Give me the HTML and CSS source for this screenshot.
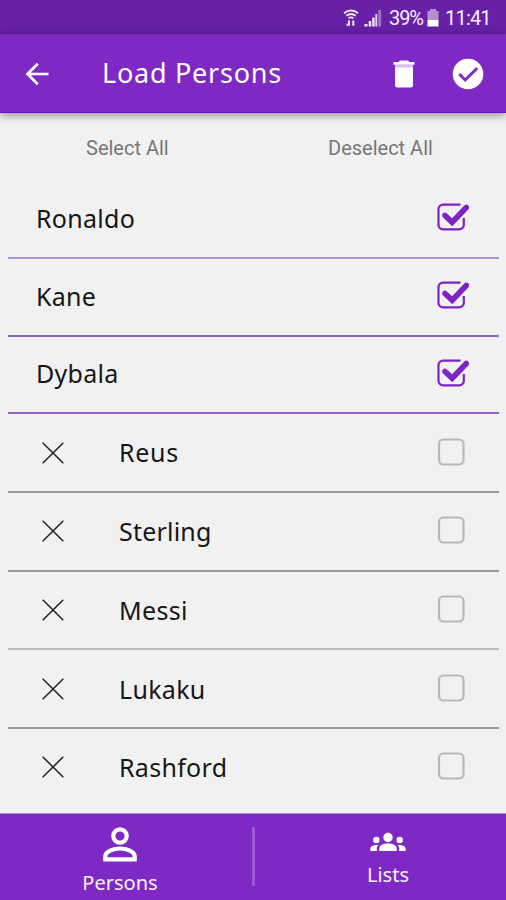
FILE: index.html
```html
<!DOCTYPE html>
<html lang="en">
<head>
<meta charset="utf-8">
<title>Load Persons</title>
<link rel="stylesheet" href="styles.css">
</head>
<body>
<svg width="0" height="0" class="defs">
  <symbol id="checked" viewBox="0 0 32 28">
    <path d="M23.500 1.600H6a4.500 4.500 0 0 0-4.500 4.500v15.800A4.500 4.500 0 0 0 6 26.400h16.300a4.500 4.500 0 0 0 4.500-4.500V15" fill="none" stroke="#7d22c6" stroke-width="2.200"/>
    <path d="M8 12.500l7.200 6.700L29.300 4.500" fill="none" stroke="#7d22c6" stroke-width="5.600" stroke-linecap="round"/>
  </symbol>
  <symbol id="unchecked" viewBox="0 0 32 28">
    <rect x="2" y="1.500" width="24.500" height="25" rx="4.500" fill="none" stroke="#b9b9b9" stroke-width="2.200"/>
  </symbol>
  <symbol id="cross" viewBox="0 0 22 22">
    <path d="M.7.700l20.600 20.600M21.300.700L.7 21.300" fill="none" stroke="#222" stroke-width="1.500"/>
  </symbol>
</svg>
<div class="app">
  <div class="status">
    <svg class="wifi" width="16" height="18" viewBox="0 0 16 18" fill="none" stroke="#f0e6fa" stroke-width="1.900">
      <path d="M1 4.200Q8-1.200 15 4.200M3.300 6.800q4.700-3.600 9.400 0M5.600 9.300q2.400-1.800 4.800 0"/>
      <path d="M6 16.800V11.500M3.600 15.800h3M10.300 11.500v5.300" stroke-width="2"/>
    </svg>
    <svg class="signal" width="18" height="18" viewBox="0 0 18 18" fill="#f3eafc">
      <path d="M.5 15h3v2.500h-3zM4.700 12h2.500v5.500H4.700zM8.200 8.500h2.400v9H8.200z"/><path d="M11.300 5h2v12.500h-2z" opacity=".85"/><path d="M14.300 1h2.900v16.500h-2.900z" opacity=".4"/>
    </svg>
    <span class="percent">39%</span>
    <svg class="battery" width="12" height="18" viewBox="0 0 12 18" fill="#fff">
      <path d="M3 0h6v2h2.500v9H.5V2H3z" opacity=".5"/><path d="M.5 11h11v6.500H.5z"/>
    </svg>
    <span class="time">11:41</span>
  </div>
  <header class="bar">
    <svg class="back" width="24" height="24" viewBox="0 0 24 24" fill="none" stroke="#fff" stroke-width="2.700"><path d="M23.500 12H2.500M12.800 1.700L2.500 12l10.300 10.300"/></svg>
    <h1 class="title">Load Persons</h1>
    <svg class="trash" width="22" height="28" viewBox="0 0 22 28" fill="#fff">
      <path d="M7 .5h8l1.400 1.500H21.500v2.800H.5V2h5.100z"/><path d="M2 4.800h18V8H2z" opacity=".7"/><path d="M2 7.500h18V25a2.500 2.500 0 0 1-2.500 2.500h-13A2.500 2.500 0 0 1 2 25z"/>
    </svg>
    <svg class="done" width="32" height="32" viewBox="0 0 32 32"><circle cx="16" cy="16" r="15.300" fill="#fff"/><path d="M7.200 16l6 6L25.300 10" fill="none" stroke="#7f29c5" stroke-width="3"/></svg>
  </header>
  <div class="actions"><span class="select">Select All</span><span class="deselect">Deselect All</span></div>
  <main class="list">
    <div class="row on first"><span class="name ronaldo">Ronaldo</span><svg class="box"><use href="#checked"/></svg></div>
    <div class="row on"><span class="name kane">Kane</span><svg class="box"><use href="#checked"/></svg></div>
    <div class="row on"><span class="name dybala">Dybala</span><svg class="box"><use href="#checked"/></svg></div>
    <div class="row"><svg class="cross"><use href="#cross"/></svg><span class="name reus">Reus</span><svg class="box"><use href="#unchecked"/></svg></div>
    <div class="row"><svg class="cross"><use href="#cross"/></svg><span class="name sterling">Sterling</span><svg class="box"><use href="#unchecked"/></svg></div>
    <div class="row soft"><svg class="cross"><use href="#cross"/></svg><span class="name messi">Messi</span><svg class="box"><use href="#unchecked"/></svg></div>
    <div class="row"><svg class="cross"><use href="#cross"/></svg><span class="name lukaku">Lukaku</span><svg class="box"><use href="#unchecked"/></svg></div>
    <div class="row last"><svg class="cross"><use href="#cross"/></svg><span class="name rashford">Rashford</span><svg class="box"><use href="#unchecked"/></svg></div>
  </main>
  <nav class="tabs">
    <div class="tab persons">
      <svg width="34" height="35" viewBox="0 0 34 35" fill="none" stroke="#fff" stroke-width="4.200"><circle cx="17" cy="9" r="6.700"/><path d="M2.300 32.300V29c0-4.500 8-7.500 14.700-7.500s14.700 3 14.700 7.500v3.300z"/></svg>
      <span class="label">Persons</span>
    </div>
    <div class="divider"></div>
    <div class="tab lists">
      <svg width="36" height="20" viewBox="0 0 36 20" fill="#fff"><circle cx="18" cy="5.500" r="4.700"/><circle cx="6.300" cy="8" r="3.200"/><circle cx="29.700" cy="8" r="3.200"/><path d="M9.300 19v-2.500c0-3.500 4-5 8.700-5s8.700 1.500 8.700 5V19zM.3 19v-2.200c0-2.600 3.500-4.300 8.200-3.800-1.300 1.200-1.700 2.300-1.700 3.800V19zM35.700 19v-2.200c0-2.600-3.500-4.300-8.200-3.800 1.300 1.200 1.700 2.300 1.700 3.800V19z"/></svg>
      <span class="label">Lists</span>
    </div>
  </nav>
</div>
</body>
</html>
```
FILE: styles.css
```css
* { box-sizing: border-box; }
body { margin: 0; background: #f1f1f1; font-family: "Noto Sans", sans-serif; }
.defs { position: absolute; }
svg { display: block; flex: none; }
.app { width: 506px; height: 900px; display: flex; flex-direction: column; overflow: hidden; }
.status { height: 34px; flex: none; background: #6820a7; display: flex; align-items: center; padding: 2px 0 0 343px; color: #f6effd; font: 20px/30px Roboto, sans-serif; white-space: nowrap; }
.signal { margin-left: 5px; }
.percent { width: 35px; margin-left: 7px; letter-spacing: -1.1px; }
.battery { margin-left: 3px; }
.time { margin-left: 6px; letter-spacing: -.8px; }
.bar { height: 79px; flex: none; background: #7f29c5; border-bottom: 1px solid #7210b5; box-shadow: 0 2px 9px rgba(0,0,0,.42); display: flex; align-items: center; padding-left: 25px; color: #fff; z-index: 1; }
.back { margin-top: 1px; }
.title { margin: 0 0 0 53px; width: 291px; font-size: 27px; font-weight: 400; line-height: 36px; letter-spacing: .75px; }
.trash { margin-top: 1px; }
.done { margin: 1px 0 0 37px; }
.actions { height: 67px; flex: none; display: flex; align-items: center; padding: 3px 0 0 86px; color: #777; font: 20px/24px Roboto, sans-serif; }
.select { width: 242px; }
.list { flex: none; height: 633px; }
.row { height: 78.700px; margin: 0 7px 0 8px; border-bottom: 2px solid #999; display: flex; align-items: center; padding-left: 28px; }
.row.on { height: 77.600px; border-color: #8f62c5; }
.row.first { height: 79px; border-color: #ab93d4; }
.row.soft { border-color: #bbb; }
.row.last { border-color: transparent; }
.name { color: #171717; font-size: 25px; line-height: 34px; letter-spacing: .3px; }
.on .name { margin-bottom: 2px; }
.reus { letter-spacing: .7px; margin-bottom: 1px; }
.sterling { letter-spacing: .2px; }
.cross { width: 22px; height: 22px; margin: 0 55.500px 0 5.500px; }
.box { width: 32px; height: 28px; margin: 0 30px 2px auto; }
.on .box { margin-bottom: 3px; }
.tabs { height: 87px; flex: none; background: #7f29c5; border-top: 1px solid #b58dd9; display: flex; color: #f9f2ff; }
.tab { display: flex; flex-direction: column; align-items: center; }
.persons { width: 240px; margin-right: 12px; padding-top: 13px; }
.lists { width: 246px; margin-left: 10px; padding-top: 18px; }
.divider { width: 3px; height: 59px; flex: none; margin-top: 13px; background: #9d59d5; }
.persons, .lists { flex: none; }
.label { font-size: 20px; line-height: 26px; }
.persons .label { margin-top: 8px; }
.lists .label { margin-top: 10px; }
```
